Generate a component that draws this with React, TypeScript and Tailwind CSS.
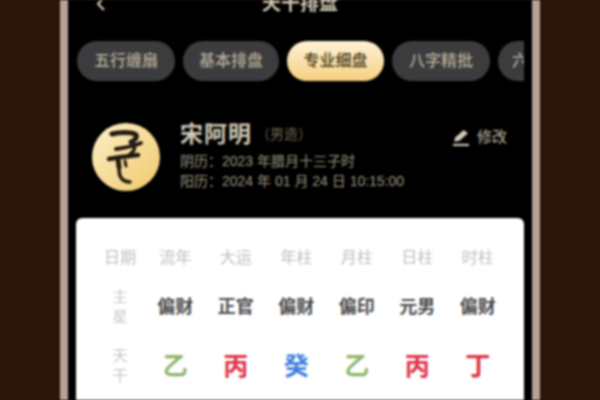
const font = "font-['Liberation_Sans','Noto_Sans_CJK_SC',sans-serif]"

const tabs = [
  { label: '五行缠扇', w: 'w-[98px]' },
  { label: '基本排盘', w: 'w-[96px]' },
  { label: '专业细盘', w: 'w-[97px]', active: true },
  { label: '八字精批', w: 'w-[98px]' },
  { label: '六爻', w: 'w-[60px]' },
]

const heads = ['日期', '流年', '大运', '年柱', '月柱', '日柱', '时柱']
const stars = ['偏财', '正官', '偏财', '偏印', '元男', '偏财']
const stems = [
  { t: '乙', c: 'text-[#8db56c]' },
  { t: '丙', c: 'text-[#e03348]' },
  { t: '癸', c: 'text-[#3f7fe0]' },
  { t: '乙', c: 'text-[#8db56c]' },
  { t: '丙', c: 'text-[#e03348]' },
  { t: '丁', c: 'text-[#e03348]' },
]

function Dragon() {
  return (
    <svg viewBox="0 0 68 68" className="w-[68px] h-[68px]">
      <g fill="none" stroke="#231a10" strokeLinecap="round" strokeLinejoin="round">
        <path d="M20 11c8-2 18-2 23 0 3 2 1 6-4 8" strokeWidth="5" />
        <path d="M24 26c8-1 18-3 25-6" strokeWidth="4" />
        <path d="M40 20c4 4 3 8-2 11" strokeWidth="3.5" />
        <path d="M17 36c9-2 20-3 29-4" strokeWidth="4.5" />
        <path d="M26 36l1 8" strokeWidth="5" />
        <path d="M33 38l1 5" strokeWidth="3" />
        <path d="M27 44c0 5 0 9 3 12 2 2 5 3 8 3" strokeWidth="3.5" />
      </g>
    </svg>
  )
}

function VLabel({ a, b }: { a: string; b: string }) {
  return (
    <div className="flex flex-col items-center leading-[20px] text-[15px] text-[#cacaca]">
      <span>{a}</span>
      <span>{b}</span>
    </div>
  )
}

export default function App() {
  return (
    <div className={`w-[600px] h-[400px] overflow-hidden flex justify-center bg-[#2a1509] ${font}`}>
      <div className="w-[480px] h-[400px] border-x-[8px] border-[#b8a298] bg-black flex flex-col blur-[1px]">
        {/* Title bar, cut off by the top of the picture */}
        <div className="h-[41px] shrink-0 relative flex justify-center">
          <span className="-mt-[7px] text-[19px] font-bold leading-[22px] text-[#cfc7b2]">天干排盘</span>
          <svg viewBox="0 0 12 12" className="absolute left-[27px] top-0 w-[12px] h-[12px]">
            <path d="M9 -3 3 4l6 6" fill="none" stroke="#d8d0bc" strokeWidth="2" />
          </svg>
        </div>

        {/* Tabs */}
        <div className="h-[40px] shrink-0 ml-[9px] mr-[8px] flex gap-[8px] overflow-hidden">
          {tabs.map((tab) => (
            <div
              key={tab.label}
              className={`${tab.w} shrink-0 h-[40px] rounded-full flex items-center justify-center text-[16px] font-medium ${
                tab.active
                  ? 'bg-gradient-to-b from-[#fdf3d8] to-[#f6cf7c] text-[#4a3a20] font-bold'
                  : 'bg-[#3c3c3e] text-[#b5ac98]'
              }`}
            >
              {tab.label}
            </div>
          ))}
        </div>

        {/* Profile */}
        <div className="mt-[42px] ml-[24px] mr-[25px] h-[68px] shrink-0 flex">
          <div className="w-[68px] h-[68px] shrink-0 rounded-full bg-gradient-to-br from-[#fdf0c8] to-[#f0c868] overflow-hidden">
            <Dragon />
          </div>
          <div className="ml-[20px] flex-1 min-w-0">
            <div className="flex items-center h-[24px] mt-[-1px]">
              <span className="text-[23px] leading-[24px] font-bold text-[#cfc8b4] tracking-[1px]">宋阿明</span>
              <span className="ml-[4px] text-[14px] text-[#6e5f4c]">（男造）</span>
            </div>
            <div className="mt-[5px] text-[14px] leading-[20px] text-[#9a947f] whitespace-nowrap">阴历：2023 年腊月十三子时</div>
            <div className="text-[14px] leading-[20px] text-[#9a947f] whitespace-nowrap">阳历：2024 年 01 月 24 日 10:15:00</div>
          </div>
          <div className="flex items-center h-[28px] self-start">
            <svg viewBox="0 0 16 16" className="w-[17px] h-[17px] mr-[8px]">
              <path d="M11 1 15 4 7 11 2 12 3 8Z" fill="#cfc8b4" />
              <path d="M1 15h15" stroke="#cfc8b4" strokeWidth="2" />
            </svg>
            <span className="text-[15px] text-[#bdb6a2]">修改</span>
          </div>
        </div>

        {/* Chart card */}
        <div className="mt-[27px] ml-[8px] mr-[8px] flex-1 bg-white rounded-t-[6px] pl-[19px] pt-[29px]">
          <div className="grid grid-cols-[50px_repeat(6,60.5px)] text-center">
            {heads.map((h) => (
              <div key={h} className="h-[22px] leading-[22px] text-[16px] text-[#c2c2c2] whitespace-nowrap flex justify-center">{h}</div>
            ))}
          </div>
          <div className="grid grid-cols-[50px_repeat(6,60.5px)] text-center items-center mt-[18px]">
            <VLabel a="主" b="星" />
            {stars.map((s, i) => (
              <div key={i} className="text-[18px] font-bold text-[#4a4a4a]">{s}</div>
            ))}
          </div>
          <div className="grid grid-cols-[50px_repeat(6,60.5px)] text-center items-center mt-[19px]">
            <VLabel a="天" b="干" />
            {stems.map((s, i) => (
              <div key={i} className={`text-[25px] leading-[32px] font-bold ${s.c}`}>{s.t}</div>
            ))}
          </div>
        </div>
      </div>
    </div>
  )
}
